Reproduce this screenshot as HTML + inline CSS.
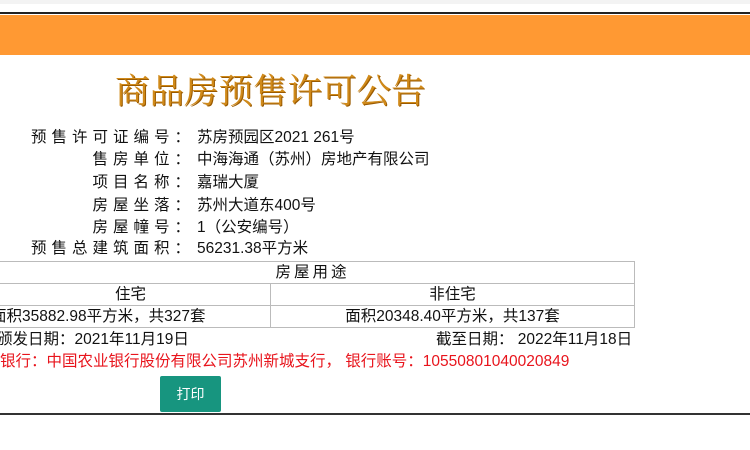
<!DOCTYPE html>
<html><head><meta charset="utf-8"><style>
body{margin:0;width:750px;height:450px;background:#fff;position:relative;overflow:hidden;font-family:"Liberation Sans","Noto Sans CJK SC",sans-serif;font-size:15.5px;color:#111}
.a{position:absolute;white-space:nowrap;line-height:20px}
.lab{position:absolute;right:555px;white-space:nowrap;letter-spacing:5px;line-height:20px}
.val{position:absolute;left:197px;white-space:nowrap;line-height:20px}
table{position:absolute;left:-10px;top:261px;width:645px;border-collapse:collapse;table-layout:fixed}
td{border:1px solid #bbb;height:21px;padding:0;text-align:center;line-height:20px;white-space:nowrap;overflow:hidden}
</style></head><body>
<div style="position:absolute;left:0;top:0;width:750px;height:4px;background:#f3f3f3"></div>
<div style="position:absolute;left:0;top:12px;width:750px;height:2px;background:#222"></div>
<div style="position:absolute;left:0;top:15px;width:750px;height:40px;background:#ff9933"></div>
<div class="a" style="left:115px;top:70px;line-height:44px;font-size:34.5px;font-family:'Liberation Serif','Noto Serif CJK SC',serif;color:#d08a1a;text-shadow:1px 1px 0 #9a5a00">商品房预售许可公告</div>
<div class="lab" style="top:128px">预售许可证编号：</div><div class="val" style="top:128px">苏房预园区2021 261号</div>
<div class="lab" style="top:150px">售房单位：</div><div class="val" style="top:150px">中海海通（苏州）房地产有限公司</div>
<div class="lab" style="top:173px">项目名称：</div><div class="val" style="top:173px">嘉瑞大厦</div>
<div class="lab" style="top:196px">房屋坐落：</div><div class="val" style="top:196px">苏州大道东400号</div>
<div class="lab" style="top:218px">房屋幢号：</div><div class="val" style="top:218px">1（公安编号）</div>
<div class="lab" style="top:239px">预售总建筑面积：</div><div class="val" style="top:239px">56231.38平方米</div>
<table>
<colgroup><col style="width:280px"><col></colgroup>
<tr><td colspan="2" style="letter-spacing:3px">房屋用途</td></tr>
<tr><td>住宅</td><td>非住宅</td></tr>
<tr><td style="text-align:right;padding-right:81px">面积35882.98平方米，共327套</td><td>面积20348.40平方米，共137套</td></tr>
</table>
<div class="a" style="left:-34px;top:330px">发证颁发日期：2021年11月19日</div>
<div class="a" style="left:436px;top:330px">截至日期：&nbsp;2022年11月18日</div>
<div class="a" style="left:-31px;top:352px;color:#e8141c">开户银行：中国农业银行股份有限公司苏州新城支行， 银行账号：10550801040020849</div>
<div class="a" style="left:160px;top:376px;width:61px;height:36px;line-height:36px;background:#17957f;color:#fff;text-align:center;font-size:14px;border-radius:2px">打印</div>
<div style="position:absolute;left:0;top:413px;width:750px;height:2px;background:#333"></div>
</body></html>
